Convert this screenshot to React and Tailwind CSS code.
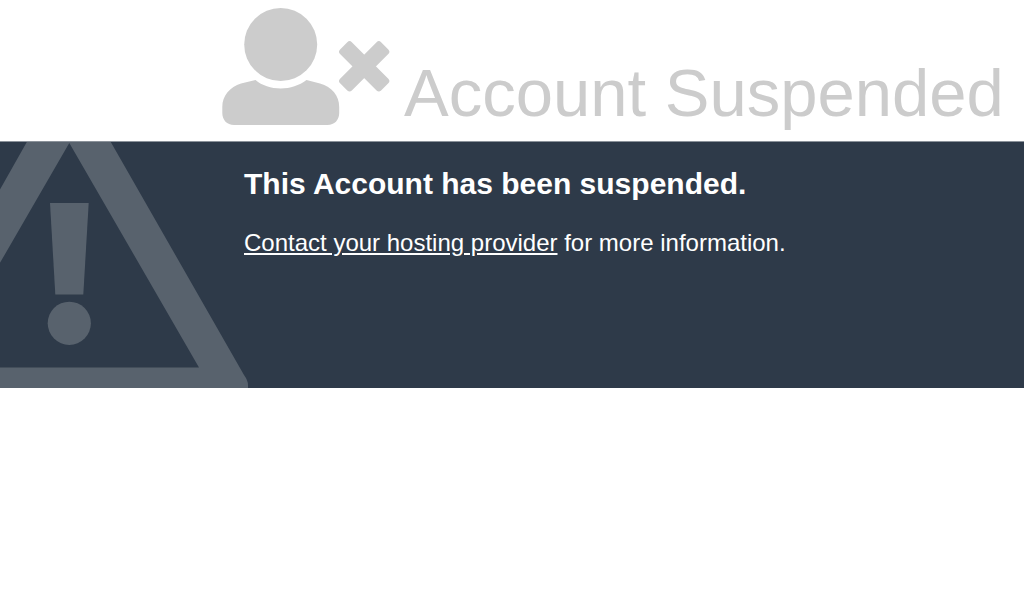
import React from "react";

const UserTimesIcon = () => (
  <svg
    className="w-[168px] h-[117px] shrink-0"
    viewBox="0 0 168 117"
    fill="currentColor"
    aria-hidden="true"
  >
    <circle cx="58.7" cy="36.5" r="36.5" />
    <path d="M33.5 72C40 77.5 49 80.5 58.7 80.5S77 77.5 84.5 72L98 75.5C110 79 117.2 87.5 117.2 99V105C117.2 112 112.5 117 105.5 117H12C5 117 .3 112 .3 105V99C.3 87.5 8 79 19 75.5Z" />
    <g transform="rotate(45 142.2 58.3)">
      <rect x="113.2" y="50" width="58" height="16.6" rx="3.2" />
      <rect x="133.9" y="29.3" width="16.6" height="58" rx="3.2" />
    </g>
  </svg>
);

const WarningIcon = () => (
  <svg
    className="w-[244px] h-[246px] shrink-0 overflow-visible"
    viewBox="0 1 244 246"
    fill="currentColor"
    aria-hidden="true"
  >
    <path
      fillRule="evenodd"
      d="M27.4 0H110.2L244 234Q248 239.5 248 244V247H-109V244Q-109 239.5 -105 234ZM69.3 2L-60.5 226.5H199Z"
    />
    <path d="M50 62H88.7L83.3 153.5H55.3Z" />
    <circle cx="69.3" cy="182.3" r="21.6" />
  </svg>
);

const App = () => {
  return (
    <div className="min-h-screen bg-white font-['Liberation_Sans',Arial,sans-serif]">
      {/* Header */}
      <header className="flex items-end gap-3.5 pt-2 pb-4 pl-[222px] text-[#cccccc]">
        <UserTimesIcon />
        <h1 className="text-[67px] leading-16 whitespace-nowrap">
          Account Suspended
        </h1>
      </header>

      {/* Notice */}
      <main className="flex overflow-hidden border-t border-[#8b929a] bg-[#2e3a49] text-white">
        <div className="flex text-[#58626d]">
          <WarningIcon />
        </div>
        <div className="relative pt-6">
          <h2 className="text-[30px] leading-9 font-bold">
            This Account has been suspended.
          </h2>
          <p className="mt-6 text-2xl leading-[34px]">
            <a href="#contact" className="underline">
              Contact your hosting provider
            </a>{" "}
            for more information.
          </p>
        </div>
      </main>
    </div>
  );
};

export default App;
